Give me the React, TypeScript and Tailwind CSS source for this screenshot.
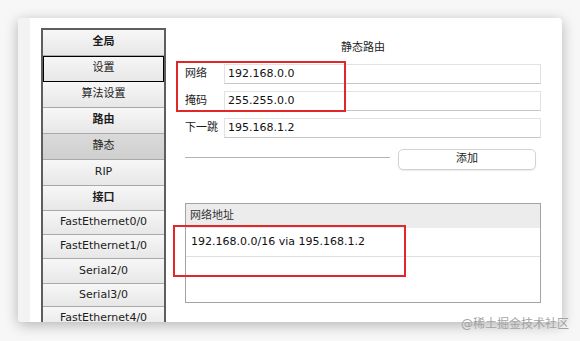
import React from 'react';

interface NavItem {
  label: string;
  h: string;
  bold?: boolean;
  active?: boolean;
  selected?: boolean;
}

const navItems: NavItem[] = [
  { label: '全局', h: 'h-[26px]', bold: true },
  { label: '设置', h: 'h-[26px]', selected: true },
  { label: '算法设置', h: 'h-[26px]' },
  { label: '路由', h: 'h-[26px]', bold: true },
  { label: '静态', h: 'h-[26px]', active: true },
  { label: 'RIP', h: 'h-[26px]' },
  { label: '接口', h: 'h-[25px]', bold: true },
  { label: 'FastEthernet0/0', h: 'h-[24px]' },
  { label: 'FastEthernet1/0', h: 'h-[24px]' },
  { label: 'Serial2/0', h: 'h-[25px]' },
  { label: 'Serial3/0', h: 'h-[23px]' },
  { label: 'FastEthernet4/0', h: 'h-[24px]' },
];

const fields = [
  { label: '网络', value: '192.168.0.0' },
  { label: '掩码', value: '255.255.0.0' },
  { label: '下一跳', value: '195.168.1.2' },
];

const font = "font-['DejaVu_Sans','Noto_Sans_CJK_SC',sans-serif]";

export default function App() {
  return (
    <div className={`relative h-[341px] w-[580px] overflow-hidden bg-[#f7f7f7] ${font} text-[11px] text-[#1c1c1c]`}>
      {/* 窗口 */}
      <div className="absolute left-[18px] top-[18px] flex h-[304px] w-[544px] overflow-hidden rounded-[4px] bg-white shadow-[0_3px_14px_rgba(0,0,0,0.28)]">
        <div className="w-[12px] shrink-0 bg-[#f3f3f3]" />

        {/* 左侧菜单 */}
        <div className="ml-[11px] mt-[10px] w-[125px] shrink-0 self-start border-2 border-b-0 border-[#5e5e5e]">
          {navItems.map((item) => (
            <div
              key={item.label}
              className={`flex ${item.h} items-center justify-center border-b border-[#a9a9a9] ${
                item.active
                  ? 'bg-gradient-to-b from-[#dadada] to-[#cfcfcf]'
                  : 'bg-gradient-to-b from-[#f7f7f7] to-[#e7e7e7]'
              } ${item.selected ? 'outline outline-1 -outline-offset-1 outline-black' : ''} ${
                item.bold ? 'font-bold' : ''
              }`}
            >
              {item.label}
            </div>
          ))}
        </div>

        {/* 右侧内容 */}
        <div className="ml-[19px] mr-[21px] flex flex-1 flex-col">
          <div className="mt-[23px] h-[14px] text-center leading-[14px]">静态路由</div>

          <div className="mt-[9px] flex flex-col gap-[7px]">
            {fields.map((f) => (
              <div key={f.label} className="flex h-[20px] items-center">
                <span className="w-[39px] shrink-0">{f.label}</span>
                <div className="flex h-full flex-1 items-center border border-[#e2e2e2] border-b-[#c6c6c6] pl-[3px] text-[#111]">
                  {f.value}
                </div>
              </div>
            ))}
          </div>

          <div className="mt-[11px] flex h-[21px]">
            <div className="mt-[8px] h-px w-[205px] bg-[#b3b3b3]" />
            <button className="ml-[8px] flex h-full w-[138px] items-center justify-center rounded-[5px] border border-[#d2d2d2] bg-white shadow-[0_1px_1px_rgba(0,0,0,0.08)]">
              添加
            </button>
          </div>

          <div className="mt-[33px] flex h-[100px] flex-col border border-[#a3a3a3]">
            <div className="flex h-[24px] items-center bg-[#ececec] pl-[4px] text-[#333]">网络地址</div>
            <div className="flex h-[29px] items-center border-b border-[#e0e0e0] pl-[5px] text-[#111]">
              192.168.0.0/16 via 195.168.1.2
            </div>
          </div>
        </div>

        {/* 标注框 */}
        <div className="absolute left-[158px] top-[43px] h-[51px] w-[170px] border-2 border-[#e3262a]" />
        <div className="absolute left-[155px] top-[207px] h-[52px] w-[233px] border-2 border-[#e3262a]" />
      </div>

      <div className="absolute left-[461px] top-[315px] text-[12px] text-[#a3a3a3]">@稀土掘金技术社区</div>
    </div>
  );
}
